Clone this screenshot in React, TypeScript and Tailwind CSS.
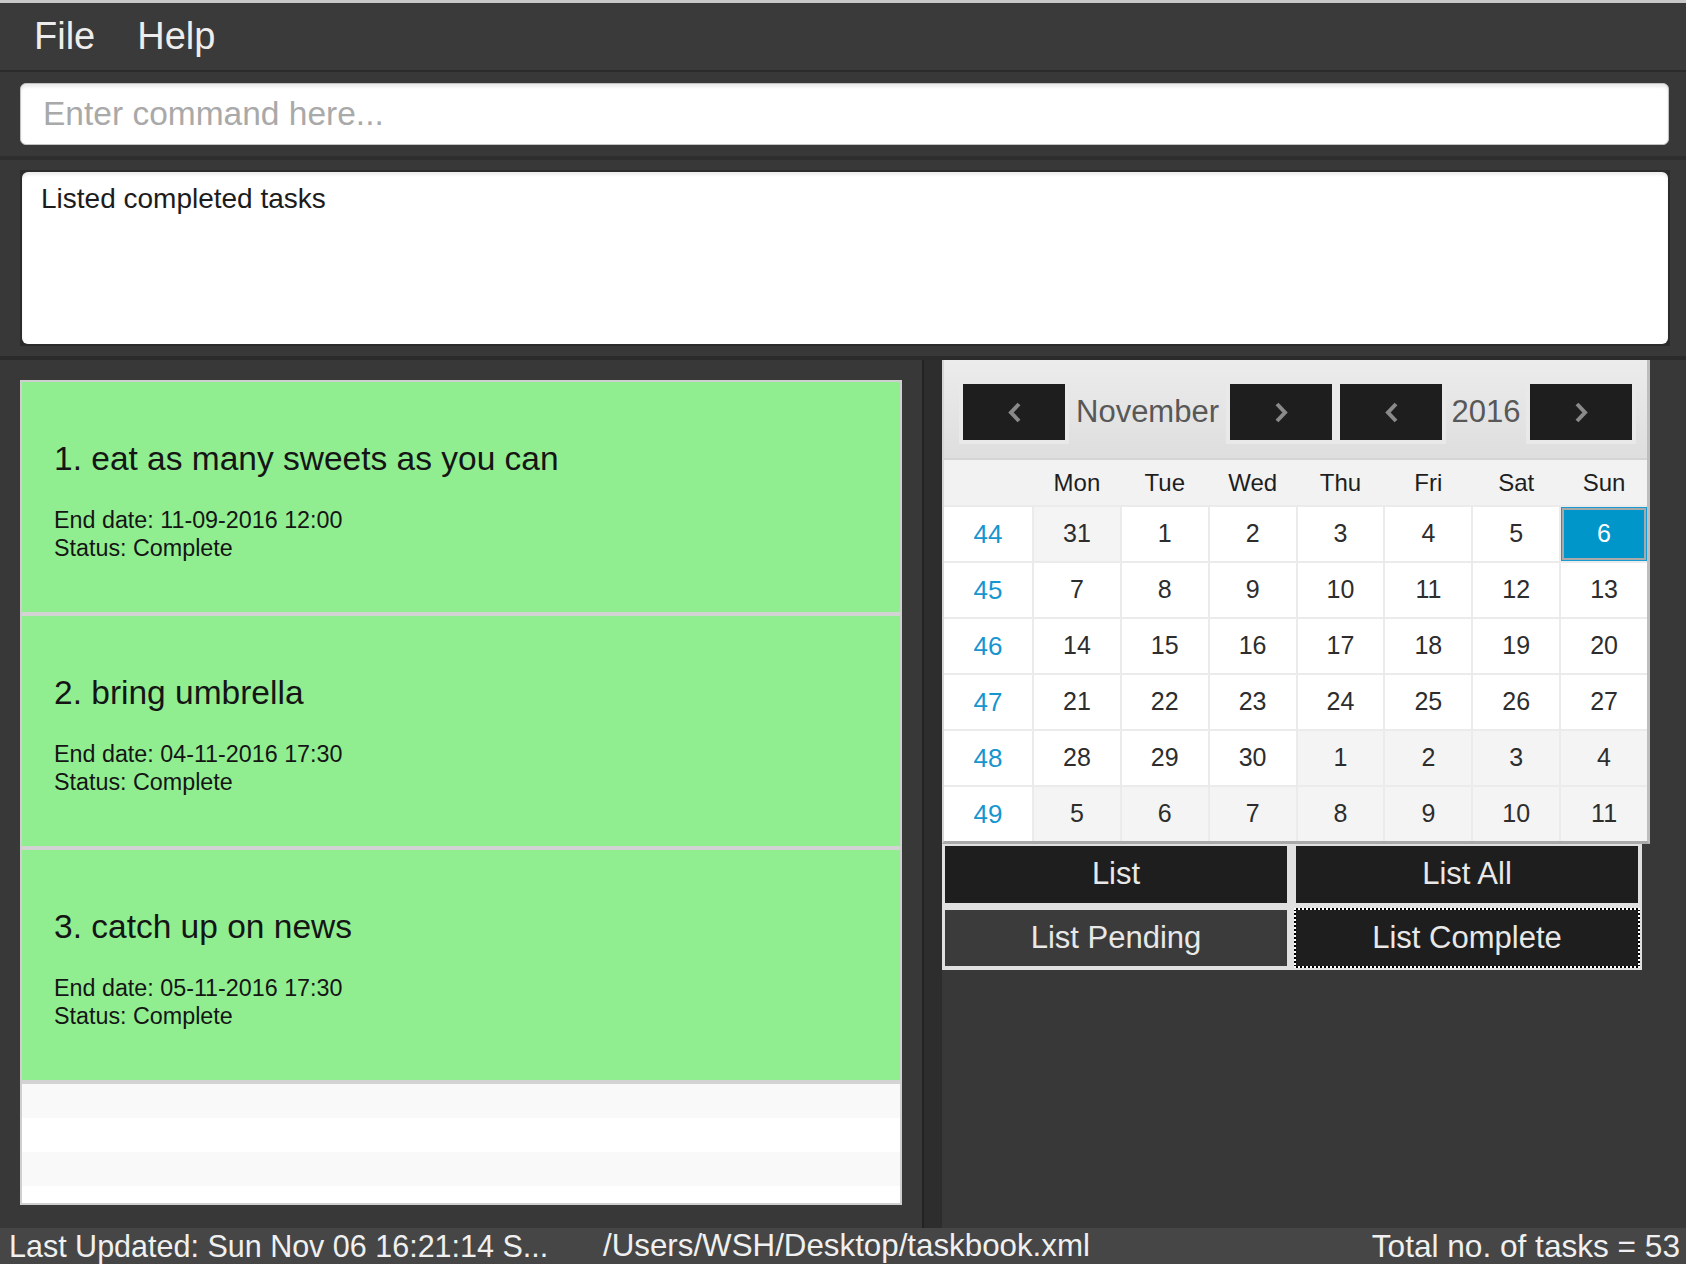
import React from 'react';

const weeks: { no: number; days: number[]; other: boolean[] }[] = [
  { no: 44, days: [31, 1, 2, 3, 4, 5, 6], other: [true, false, false, false, false, false, false] },
  { no: 45, days: [7, 8, 9, 10, 11, 12, 13], other: [false, false, false, false, false, false, false] },
  { no: 46, days: [14, 15, 16, 17, 18, 19, 20], other: [false, false, false, false, false, false, false] },
  { no: 47, days: [21, 22, 23, 24, 25, 26, 27], other: [false, false, false, false, false, false, false] },
  { no: 48, days: [28, 29, 30, 1, 2, 3, 4], other: [false, false, false, true, true, true, true] },
  { no: 49, days: [5, 6, 7, 8, 9, 10, 11], other: [true, true, true, true, true, true, true] },
];

const dayNames = ['Mon', 'Tue', 'Wed', 'Thu', 'Fri', 'Sat', 'Sun'];

const tasks = [
  { title: '1. eat as many sweets as you can', end: '11-09-2016 12:00' },
  { title: '2. bring umbrella', end: '04-11-2016 17:30' },
  { title: '3. catch up on news', end: '05-11-2016 17:30' },
];

function Chevron({ dir }: { dir: 'left' | 'right' }) {
  const pts = dir === 'left' ? '11,2 3,10.5 11,19' : '2,2 10,10.5 2,19';
  return (
    <svg width="13" height="21" viewBox="0 0 13 21">
      <polyline points={pts} fill="none" stroke="#8a8a8a" strokeWidth="4" strokeLinejoin="miter" />
    </svg>
  );
}

function NavButton({ dir }: { dir: 'left' | 'right' }) {
  return (
    <div className="p-[4px] bg-[#e9e9e9]">
      <div className="w-[102px] h-[56px] bg-[#1e1e1e] flex items-center justify-center">
        <Chevron dir={dir} />
      </div>
    </div>
  );
}

export default function App() {
  return (
    <div
      className="w-[1686px] h-[1264px] overflow-hidden bg-[#383838] flex flex-col"
      style={{ fontFamily: '"Liberation Sans", Arial, sans-serif' }}
    >
      <div className="h-[3px] bg-[#c8c8c8]" />

      {/* menu bar */}
      <div className="h-[67px] bg-[#3a3a3a] flex items-center pl-[34px] gap-[42px] text-[38px] text-[#ededed]">
        <span>File</span>
        <span>Help</span>
      </div>
      <div className="h-[2px] bg-[#2b2b2b]" />

      {/* command box */}
      <div className="h-[84px] pt-[11px] pl-[20px] pr-[17px]">
        <div className="h-[62px] bg-white rounded-[6px] border border-[#c2c2c2] shadow-[inset_0_3px_3px_rgba(0,0,0,0.08)] flex items-center pl-[22px] text-[33.5px] text-[#a9a9a9]">
          Enter command here...
        </div>
      </div>
      <div className="h-[4px] bg-[#2e2e2e]" />

      {/* result display */}
      <div className="h-[196px] py-[10px] pl-[20px] pr-[16px]">
        <div className="h-full border-2 border-[#2b2b2b] bg-[#2b2b2b]">
          <div className="h-full bg-white rounded-[6px] shadow-[inset_0_3px_3px_rgba(0,0,0,0.07)] pt-[10px] pl-[19px] text-[28px] leading-[34px] text-[#1c1c1c]">
            Listed completed tasks
          </div>
        </div>
      </div>
      <div className="h-[4px] bg-[#2b2b2b]" />

      {/* main split */}
      <div className="flex-1 flex min-h-0">
        <div className="w-[922px] pt-[20px] pl-[20px]">
          <div className="w-[882px] h-[825px] border-2 border-[#cfcfcf] bg-white flex flex-col overflow-hidden">
            {tasks.map((t) => (
              <div
                key={t.title}
                className="h-[234px] shrink-0 bg-[#90ee90] border-b-4 border-[#d3d3d3] pl-[32px] pt-[57px] text-[#151515]"
              >
                <div className="text-[33.5px] leading-[40px]">{t.title}</div>
                <div className="mt-[27px] text-[23.3px] leading-[28px]">
                  <div>End date: {t.end}</div>
                  <div>Status: Complete</div>
                </div>
              </div>
            ))}
            <div className="h-[34px] shrink-0 bg-[#f9f9f9]" />
            <div className="h-[34px] shrink-0 bg-white" />
            <div className="h-[34px] shrink-0 bg-[#f9f9f9]" />
            <div className="flex-1 bg-white" />
          </div>
        </div>

        <div className="w-[20px] bg-[#2d2d2d] border-l-2 border-[#222222]" />

        <div className="flex-1 flex flex-col">
          {/* calendar */}
          <div className="w-[708px] border-l-2 border-l-[#d6d6d6] border-r-[3px] border-r-[#bdbdbd] border-b-[3px] border-b-[#a9a9a9] bg-white">
            <div className="h-[100px] bg-linear-to-b from-[#ececec] to-[#dedede] border-b-2 border-[#d4d4d4] flex items-center pl-[15px] pt-[6px]">
              <NavButton dir="left" />
              <div className="w-[157px] text-center text-[31px] text-[#585858]">November</div>
              <NavButton dir="right" />
              <NavButton dir="left" />
              <div className="w-[80px] text-center text-[31px] text-[#585858]">2016</div>
              <NavButton dir="right" />
            </div>
            <div className="h-[45px] bg-[#f2f2f2] grid grid-cols-[88px_repeat(7,1fr)] gap-x-[2px] items-center text-[24px] text-[#1e1e1e]">
              <div />
              {dayNames.map((d) => (
                <div key={d} className="text-center">{d}</div>
              ))}
            </div>
            <div className="h-[336px] grid grid-cols-[88px_repeat(7,1fr)] grid-rows-6 gap-[2px] bg-[#ebebeb] pt-[2px]">
              {weeks.map((w, wi) => (
                <React.Fragment key={w.no}>
                  <div className="bg-white flex items-center justify-center text-[26px] text-[#1695cf]">{w.no}</div>
                  {w.days.map((d, di) => {
                    const selected = wi === 0 && di === 6;
                    if (selected) {
                      return (
                        <div key={di} className="bg-[#0096c9] border border-[#1a9bd0] flex">
                          <div className="flex-1 border-2 border-[#a9a9a9] flex items-center justify-center text-[25px] text-white">
                            {d}
                          </div>
                        </div>
                      );
                    }
                    return (
                      <div
                        key={di}
                        className={`${w.other[di] ? 'bg-[#f4f4f4]' : 'bg-white'} flex items-center justify-center text-[25px] text-[#2d2d2d]`}
                      >
                        {d}
                      </div>
                    );
                  })}
                </React.Fragment>
              ))}
            </div>
          </div>

          {/* list buttons */}
          <div className="w-[700px] h-[126px] bg-[#e0e0e0] pl-[3px] pr-[4px] pt-[2px] pb-[4px] grid grid-cols-2 gap-x-[9px] gap-y-[7px] text-[31px] text-[#e8e8e8]">
            <div className="bg-[#1e1e1e] flex items-center justify-center">List</div>
            <div className="bg-[#1e1e1e] flex items-center justify-center">List All</div>
            <div className="bg-[#3b3b3b] flex items-center justify-center">List Pending</div>
            <div className="bg-[#1e1e1e] flex items-center justify-center shadow-[0_0_0_2px_#000] outline-2 outline-dotted outline-white">
              List Complete
            </div>
          </div>
        </div>
      </div>

      {/* status bar */}
      <div className="h-[36px] bg-[#464646] flex leading-[36px] text-[#f0f0f0] overflow-hidden whitespace-nowrap">
        <div className="w-[603px] pl-[9px] text-[30.5px]">Last Updated: Sun Nov 06 16:21:14 S...</div>
        <div className="text-[31.3px]">/Users/WSH/Desktop/taskbook.xml</div>
        <div className="flex-1" />
        <div className="pr-[6px] text-[31.6px]">Total no. of tasks = 53</div>
      </div>
    </div>
  );
}
